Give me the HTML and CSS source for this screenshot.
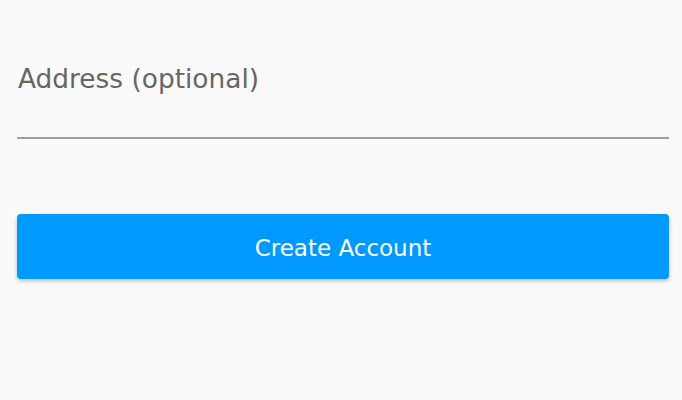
FILE: index.html
```html
<!DOCTYPE html>
<html lang="en">
<head>
    <meta charset="UTF-8">
    <meta name="viewport" content="width=device-width, initial-scale=1.0">
    <title>Create Account</title>
    <link rel="stylesheet" href="styles.css">
</head>
<body>

    <section class="form">
        <div class="field">
            <label class="field-label">Address (optional)</label>
        </div>

        <button class="submit">Create Account</button>
    </section>

</body>
</html>
```

FILE: styles.css
```css
* {
    margin: 0;
    padding: 0;
    box-sizing: border-box;
    font-family: 'DejaVu Sans', sans-serif;
}

body {
    background-color: #fafafa;
    width: 682px;
    height: 400px;
    overflow: hidden;
}

.form {
    padding: 0 13px 0 17px;
    display: flex;
    flex-direction: column;
}

.field {
    padding-top: 62px;
    height: 139px;
    border-bottom: 2px solid #9e9e9e;
}

.field-label {
    display: block;
    padding-left: 1px;
    color: #666;
    font-size: 26.4px;
    line-height: 34px;
}

.submit {
    margin-top: 75px;
    height: 65px;
    width: 100%;
    padding-top: 3px;
    background: #0099ff;
    color: white;
    font-size: 23px;
    border: none;
    border-radius: 4px;
    box-shadow: 0px 2px 4px rgba(0, 0, 0, 0.25);
}
```
